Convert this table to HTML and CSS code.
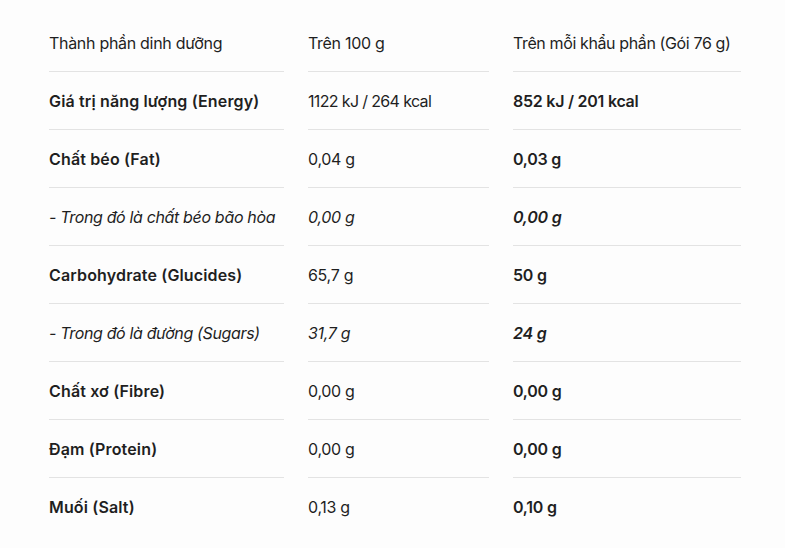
FILE: index.html
```html
<!DOCTYPE html>
<html lang="vi">
<head>
<meta charset="utf-8">
<link rel="stylesheet" href="styles.css">
</head>
<body>
<div class="wrap">
<table class="nutri">
  <colgroup>
    <col class="c1"><col class="c2"><col class="c3">
  </colgroup>
  <thead>
    <tr><th>Thành phần dinh dưỡng</th><th>Trên 100 g</th><th class="wide">Trên mỗi khẩu phần (Gói 76 g)</th></tr>
  </thead>
  <tbody>
    <tr><td class="b">Giá trị năng lượng (Energy)</td><td class="n tight">1122 kJ / 264 kcal</td><td class="b n">852 kJ / 201 kcal</td></tr>
    <tr><td class="b">Chất béo (Fat)</td><td class="n">0,04 g</td><td class="b n">0,03 g</td></tr>
    <tr class="sub"><td>- Trong đó là chất béo bão hòa</td><td class="n">0,00 g</td><td class="b n">0,00 g</td></tr>
    <tr><td class="b">Carbohydrate (Glucides)</td><td class="n">65,7 g</td><td class="b n">50 g</td></tr>
    <tr class="sub"><td>- Trong đó là đường (Sugars)</td><td class="n">31,7 g</td><td class="b n">24 g</td></tr>
    <tr><td class="b">Chất xơ (Fibre)</td><td class="n">0,00 g</td><td class="b n">0,00 g</td></tr>
    <tr><td class="b">Đạm (Protein)</td><td class="n">0,00 g</td><td class="b n">0,00 g</td></tr>
    <tr class="last"><td class="b">Muối (Salt)</td><td class="n">0,13 g</td><td class="b n">0,10 g</td></tr>
  </tbody>
</table>
</div>
</body>
</html>
```
FILE: styles.css
```css
html, body {
  margin: 0;
  background: #fdfdfd;
}
body {
  font-family: Inter, "Noto Sans", sans-serif;
  font-size: 16px;
  color: #1f1f1f;
}
.wrap {
  padding: 14px 0 0 25px;
}
.nutri {
  border-collapse: separate;
  border-spacing: 24px 0;
  table-layout: fixed;
  width: 740px;
}
.c1 { width: 235px; }
.c2 { width: 181px; }
.c3 { width: 228px; }
.nutri th,
.nutri td {
  height: 57px;
  padding: 0;
  text-align: left;
  vertical-align: middle;
  font-weight: 400;
  letter-spacing: -0.2px;
  border-bottom: 1px solid #e3e3e3;
  white-space: nowrap;
}
.nutri th {
  letter-spacing: -0.3px;
}
.nutri th.wide {
  letter-spacing: -0.38px;
}
.nutri td.n {
  letter-spacing: -0.3px;
}
.nutri td.tight {
  letter-spacing: -0.65px;
}
.nutri td.b {
  font-weight: 600;
  letter-spacing: 0.15px;
}
.nutri td.b.n {
  letter-spacing: -0.25px;
}
.nutri tr.sub td {
  font-style: italic;
}
.nutri tr.sub td:first-child {
  letter-spacing: -0.35px;
}
.nutri tr.last td {
  border-bottom: none;
}
```
